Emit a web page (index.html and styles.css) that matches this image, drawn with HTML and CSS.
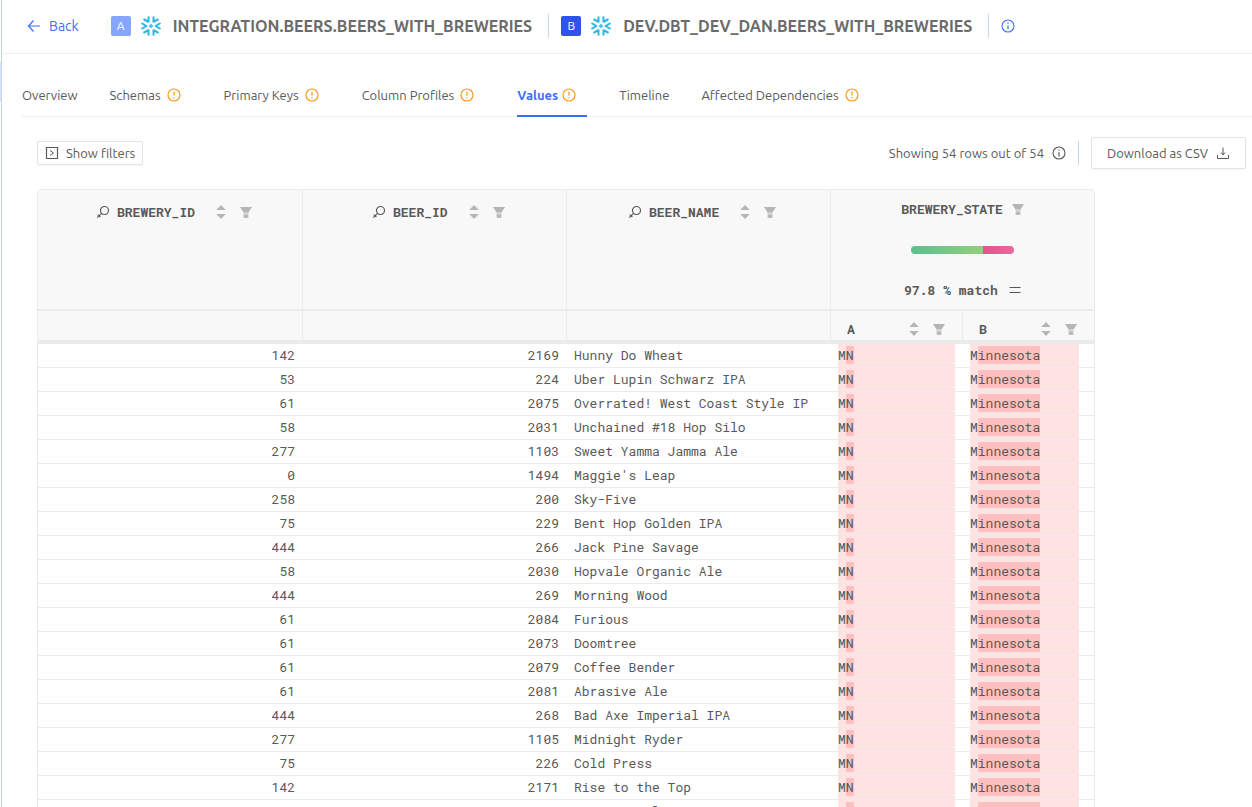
FILE: index.html
```html
<!DOCTYPE html>
<html lang="en">
<head>
  <meta charset="UTF-8">
  <meta name="viewport" content="width=device-width, initial-scale=1.0">
  <title>Values diff</title>
  <link rel="stylesheet" href="styles.css">
</head>
<body>
<svg class="sprite" aria-hidden="true">
  <symbol id="snowflake" viewBox="0 0 20 20">
    <g fill="none" stroke="#29b5e8" stroke-width="2" stroke-linecap="round" stroke-linejoin="round">
      <path d="M7.500 1.200v4.600L3.200 3.500M12.500 1.200v4.600l4.300-2.300M7.500 18.800v-4.600l-4.300 2.300M12.500 18.800v-4.600l4.300 2.300"/>
      <path d="M1.200 7.500 5.400 10l-4.200 2.500M18.800 7.500 14.600 10l4.200 2.500"/>
      <path d="M10 8.600 11.400 10 10 11.400 8.600 10z" stroke-width="1.200"/>
    </g>
  </symbol>
  <symbol id="warn" viewBox="0 0 14 14">
    <circle cx="7" cy="7" r="6" fill="none" stroke="#fa9a1e" stroke-width="1.200"/>
    <path d="M7 3.500v4.300M7 9.200v1.300" stroke="#fa9a1e" stroke-width="1.200"/>
  </symbol>
  <symbol id="info" viewBox="0 0 14 14">
    <circle cx="7" cy="7" r="6" fill="none" stroke="currentColor" stroke-width="1.100"/>
    <path d="M7 6.200v4.300M7 3.500v1.300" stroke="currentColor" stroke-width="1.200"/>
  </symbol>
  <symbol id="key" viewBox="0 0 14 14">
    <circle cx="8.500" cy="5.500" r="4" fill="none" stroke="currentColor" stroke-width="1.200"/>
    <path d="M5.600 8.400 1.200 12.600M1.800 9.600l2.600 2.600" fill="none" stroke="currentColor" stroke-width="1.200"/>
  </symbol>
  <symbol id="sort" viewBox="0 0 10 14">
    <path d="M5 0 9.800 5H.2zM5 14 .2 9h9.600z" fill="#b5b5b5"/>
  </symbol>
  <symbol id="funnel" viewBox="0 0 12 12">
    <path d="M0 1h12L8.500 6.500h-5z" fill="#b5b5b5"/>
    <path d="M3.500 6.500h5V12h-5z" fill="#d0d0d0"/>
    <path d="M4 9h4v2.500H4z" fill="#b5b5b5"/>
  </symbol>
</svg>
<div class="layout">
  <aside class="sidebar"><div class="sidebar-active"></div></aside>
  <main class="main">
    <header class="topbar">
      <a class="back" href="#">
        <svg width="14" height="14" viewBox="0 0 14 14" fill="none" stroke="currentColor" stroke-width="1.200"><path d="M13 7H1.500M6.500 1.500 1.500 7l5 5.500"/></svg>
        Back
      </a>
      <span class="badge badge-a">A</span>
      <svg class="logo"><use href="#snowflake"/></svg>
      <h1 class="title">INTEGRATION.BEERS.BEERS_WITH_BREWERIES</h1>
      <span class="divider"></span>
      <span class="badge badge-b">B</span>
      <svg class="logo"><use href="#snowflake"/></svg>
      <h1 class="title">DEV.DBT_DEV_DAN.BEERS_WITH_BREWERIES</h1>
      <span class="divider"></span>
      <button class="icon-button" aria-label="Info"><svg class="icon"><use href="#info"/></svg></button>
    </header>

    <nav class="tabs">
      <a class="tab" href="#">Overview</a>
      <a class="tab warn" href="#">Schemas<svg class="icon"><use href="#warn"/></svg></a>
      <a class="tab warn" href="#">Primary Keys<svg class="icon"><use href="#warn"/></svg></a>
      <a class="tab warn" href="#">Column Profiles<svg class="icon"><use href="#warn"/></svg></a>
      <a class="tab warn active" href="#">Values<svg class="icon"><use href="#warn"/></svg></a>
      <a class="tab" href="#">Timeline</a>
      <a class="tab warn" href="#">Affected Dependencies<svg class="icon"><use href="#warn"/></svg></a>
    </nav>

    <div class="toolbar">
      <button class="btn btn-small">
        <svg width="14" height="14" viewBox="0 0 14 14" fill="none" stroke="currentColor"><path d="M1.500 1.500h11v11h-11z" stroke-width="1.200"/><path d="M5 4.500 8.500 7 5 9.500"/></svg>
        Show filters
      </button>
      <span class="count">Showing 54 rows out of 54</span>
      <svg class="icon"><use href="#info"/></svg>
      <span class="divider"></span>
      <button class="btn">
        Download as CSV
        <svg width="14" height="14" viewBox="0 0 14 14" fill="none" stroke="currentColor"><path d="M1.500 9v3.500h11V9M7 1.500v7M5 6.500l2 2.500 2-2.500"/></svg>
      </button>
    </div>

    <div class="grid">
      <table>
        <colgroup>
          <col class="col-first"><col class="col-key"><col class="col-key">
          <col class="col-side"><col>
        </colgroup>
        <thead>
          <tr class="head">
            <th><div class="key-head"><svg class="icon"><use href="#key"/></svg><span>BREWERY_ID</span><svg class="sort"><use href="#sort"/></svg><svg class="funnel"><use href="#funnel"/></svg></div></th>
            <th><div class="key-head"><svg class="icon"><use href="#key"/></svg><span>BEER_ID</span><svg class="sort"><use href="#sort"/></svg><svg class="funnel"><use href="#funnel"/></svg></div></th>
            <th><div class="key-head"><svg class="icon"><use href="#key"/></svg><span>BEER_NAME</span><svg class="sort"><use href="#sort"/></svg><svg class="funnel"><use href="#funnel"/></svg></div></th>
            <th colspan="2">
              <div class="diff-head">
                <div class="diff-name">BREWERY_STATE <svg class="funnel"><use href="#funnel"/></svg></div>
                <div class="bar"><div class="bar-match"></div><div class="bar-diff"></div></div>
                <div class="diff-match">97.8 % match <svg width="12" height="12" viewBox="0 0 12 12" stroke="currentColor" stroke-width="1.200"><path d="M.5 3.500h11M.5 8.500h11"/></svg></div>
              </div>
            </th>
          </tr>
          <tr class="subhead">
            <th></th>
            <th></th>
            <th></th>
            <th><div class="side-head"><span>A</span><svg class="sort"><use href="#sort"/></svg><svg class="funnel"><use href="#funnel"/></svg></div></th>
            <th><div class="side-head"><span>B</span><svg class="sort"><use href="#sort"/></svg><svg class="funnel"><use href="#funnel"/></svg></div></th>
          </tr>
        </thead>
        <tbody id="rows"></tbody>
      </table>
    </div>
  </main>
</div>
<script src="script.js"></script>
</body>
</html>
```

FILE: styles.css
```css
* {
  box-sizing: border-box;
}
body {
  margin: 0;
  height: 100vh;
  overflow: hidden;
  font-family: Ubuntu, "Noto Sans", sans-serif;
  font-size: 13px;
  line-height: 20px;
  color: #595959;
  background: #fff;
}
h1 {
  margin: 0;
}
a {
  color: inherit;
  text-decoration: none;
}
button {
  font: inherit;
  color: inherit;
  cursor: pointer;
}
svg {
  flex: none;
  display: block;
}
.sprite {
  display: none;
}
.icon {
  width: 14px;
  height: 14px;
}
.layout {
  display: flex;
  height: 100vh;
}
.sidebar {
  width: 2px;
  padding-top: 62px;
  border-right: 1px solid #c9d3e0;
}
.sidebar-active {
  height: 40px;
  background: #d6e4ff;
}
.main {
  flex: 1;
  min-width: 0;
  overflow: hidden;
}

/* top bar */
.topbar {
  display: flex;
  align-items: center;
  height: 54px;
  padding: 0 25px 2px;
  border-bottom: 1px solid #eee;
  white-space: nowrap;
}
.back {
  display: flex;
  align-items: center;
  gap: 8px;
  margin-right: 32px;
  color: #3d6ff5;
  font-size: 14px;
}
.badge {
  width: 20px;
  border-radius: 2px;
  color: #fff;
  font-size: 12px;
  text-align: center;
}
.badge-a {
  background: #85a5ff;
}
.badge-b {
  background: #2f54eb;
}
.logo {
  width: 20px;
  height: 20px;
  margin: 0 10px;
}
.title {
  margin: 0 4px 0 2px;
  font-size: 16px;
  font-weight: 700;
  color: #6b6b6b;
}
.divider {
  width: 1px;
  height: 24px;
  margin: 0 12px;
  background: #c9d6e6;
}
.icon-button {
  padding: 0;
  border: 0;
  background: none;
  color: #3d6ff5;
}

/* tabs */
.tabs {
  display: flex;
  gap: 32px;
  margin: 20px 0 0 20px;
  border-bottom: 1px solid #eee;
  white-space: nowrap;
}
.tab {
  display: flex;
  align-items: center;
  gap: 6px;
  padding: 11px 0 10px;
  margin-bottom: -1px;
  border-bottom: 2px solid transparent;
}
.tab.warn {
  padding-right: 11px;
}
.tab.active {
  gap: 4px;
  color: #3d6ff5;
  font-weight: 600;
  border-bottom-color: #3d6ff5;
}

/* toolbar */
.toolbar {
  display: flex;
  align-items: center;
  margin: 20px 6px 20px 35px;
}
.btn {
  display: flex;
  align-items: center;
  gap: 8px;
  height: 32px;
  padding: 0 15px;
  border: 1px solid #e3e3e3;
  border-radius: 2px;
  background: #fff;
  box-shadow: 0 2px 0 rgba(0, 0, 0, 0.02);
}
.btn-small {
  gap: 7px;
  height: 24px;
  padding: 0 7px;
}
.count {
  margin: 0 8px 0 auto;
}

/* grid */
.grid {
  width: max-content;
  margin-left: 35px;
  border: 1px solid #ebebeb;
  border-radius: 4px;
  overflow: hidden;
}
table {
  table-layout: fixed;
  width: 1056px;
  border-spacing: 0;
  font-family: "Roboto Mono", "Liberation Mono", monospace;
}
.col-first {
  width: 265px;
}
.col-key {
  width: 264px;
}
.col-side {
  width: 132px;
}
th {
  padding: 0;
  background: #f8f8f8;
  border-right: 1px solid #ebebeb;
  vertical-align: top;
}
th:last-child {
  border-right: 0;
}
.head th {
  height: 121px;
  border-bottom: 2px solid #ebebeb;
}
.subhead th {
  height: 33px;
  border-bottom: 4px solid #ebebeb;
}
.key-head {
  display: flex;
  align-items: center;
  padding: 12px 0 0 58px;
}
.head th:nth-child(2) .key-head {
  padding-left: 69px;
}
.head th:nth-child(3) .key-head {
  padding-left: 61px;
}
.key-head .icon {
  margin-right: 7px;
}
.sort {
  width: 10px;
  height: 14px;
  margin: 0 14px 0 21px;
}
.funnel {
  width: 12px;
  height: 12px;
}
.diff-head {
  display: flex;
  flex-direction: column;
  align-items: center;
  padding-top: 9px;
}
.diff-name {
  display: flex;
  align-items: center;
  gap: 9px;
}
.bar {
  display: flex;
  width: 103px;
  height: 8px;
  margin: 27px 0 26px;
  border-radius: 4px;
  overflow: hidden;
}
.bar-match {
  flex: 7;
  background: linear-gradient(90deg, #5ac08f, #93cf7d);
}
.bar-diff {
  flex: 3;
  background: linear-gradient(90deg, #d65a8b, #e96b9c);
}
.diff-match {
  display: flex;
  align-items: center;
  gap: 11px;
}
.side-head {
  display: flex;
  align-items: center;
  padding: 8px 17px 0 16px;
}
.side-head .sort {
  margin-left: auto;
}
td {
  height: 24px;
  padding: 0 8px 0 7px;
  border-bottom: 1px solid #ebebeb;
  line-height: 23px;
  white-space: nowrap;
}
.num {
  text-align: right;
}
.value {
  background: #ffe3e2;
}
mark {
  display: inline-block;
  color: inherit;
  line-height: 18px;
  background: #ffbfbe;
}
.value-b {
  margin-right: 7px;
}
```

FILE: script.js
```js
const rows = [
  [142, 2169, 'Hunny Do Wheat'],
  [53, 224, 'Uber Lupin Schwarz IPA'],
  [61, 2075, 'Overrated! West Coast Style IP'],
  [58, 2031, 'Unchained #18 Hop Silo'],
  [277, 1103, 'Sweet Yamma Jamma Ale'],
  [0, 1494, "Maggie's Leap"],
  [258, 200, 'Sky-Five'],
  [75, 229, 'Bent Hop Golden IPA'],
  [444, 266, 'Jack Pine Savage'],
  [58, 2030, 'Hopvale Organic Ale'],
  [444, 269, 'Morning Wood'],
  [61, 2084, 'Furious'],
  [61, 2073, 'Doomtree'],
  [61, 2079, 'Coffee Bender'],
  [61, 2081, 'Abrasive Ale'],
  [444, 268, 'Bad Axe Imperial IPA'],
  [277, 1105, 'Midnight Ryder'],
  [75, 226, 'Cold Press'],
  [142, 2171, 'Rise to the Top'],
  [75, 227, 'Western Pale']
];

document.getElementById('rows').innerHTML = rows.map(([brewery, beer, name]) => `
  <tr>
    <td class="num">${brewery}</td>
    <td class="num">${beer}</td>
    <td>${name}</td>
    <td><div class="value">M<mark>N</mark></div></td>
    <td><div class="value value-b">M<mark>innesota</mark></div></td>
  </tr>`).join('');
```
